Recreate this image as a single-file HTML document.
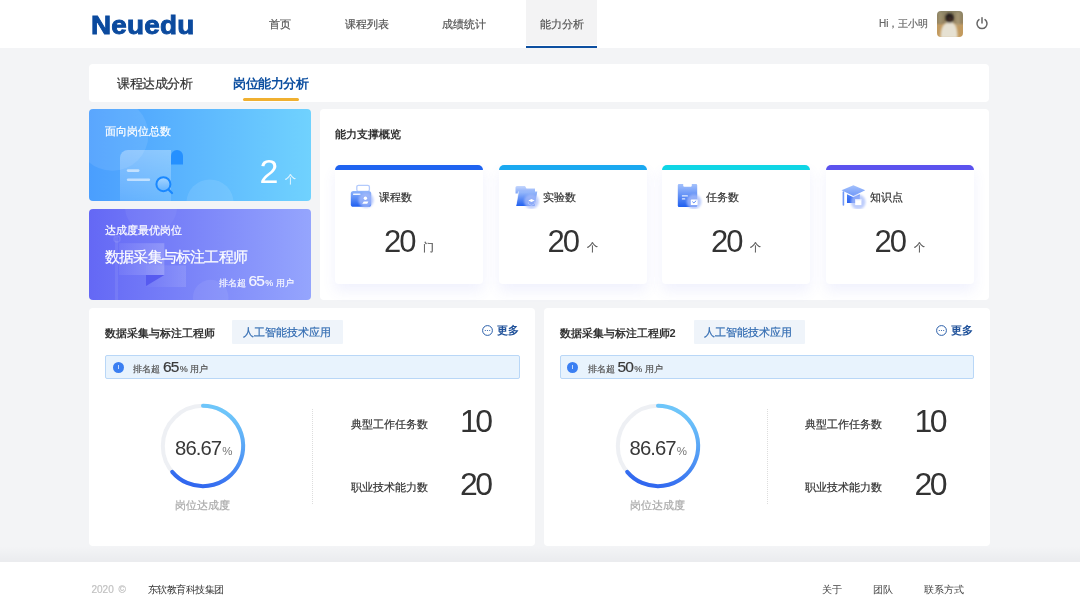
<!DOCTYPE html>
<html><head><meta charset="utf-8">
<style>
*{margin:0;padding:0;box-sizing:border-box}
html{filter:grayscale(0)}
html,body{width:1080px;height:610px;overflow:hidden;background:#f3f4f6;font-family:"Liberation Sans",sans-serif;color:#333}
.a{position:absolute;white-space:nowrap}
#hdr{position:absolute;left:0;top:0;width:1080px;height:48px;background:#fff}
.a.logo{left:91.3px;top:10px;font-size:26.3px;line-height:30px;font-weight:bold;color:#0b4a9e;letter-spacing:0.2px;transform:scaleX(1.06);transform-origin:0 0;-webkit-text-stroke:0.9px #0b4a9e}
.nav{top:16px;font-size:11px;color:#555;line-height:16px}
.card{position:absolute;background:#fff;border-radius:4px}
.a,.bc>*,.sc>*{-webkit-text-stroke:0.2px currentColor}.sn,.sc .num,.pct,.big,.bc .ttl,.bc .more,.bld{-webkit-text-stroke:0!important}
</style></head><body>
<div id="hdr">
  <div class="a logo">Neuedu</div>
  <div class="a nav" style="left:269px">首页</div>
  <div class="a nav" style="left:345px">课程列表</div>
  <div class="a nav" style="left:442px">成绩统计</div>
  <div class="a" style="left:526px;top:0;width:71px;height:45px;background:#f3f3f4"></div>
  <div class="a" style="left:526px;top:46px;width:71px;height:2px;background:#0d4fa0"></div>
  <div class="a nav" style="left:540px">能力分析</div>
  <div class="a" style="left:879px;top:17px;font-size:10px;color:#666;line-height:14px">Hi，王小明</div>
  <svg class="a" style="left:937px;top:11px" width="26" height="26" viewBox="0 0 26 26"><defs><clipPath id="avc"><rect width="26" height="26" rx="4"/></clipPath>
<linearGradient id="avbg" x1="0" y1="0" x2="0" y2="1"><stop offset="0" stop-color="#8c8466"/><stop offset="0.45" stop-color="#978460"/><stop offset="0.55" stop-color="#c09a62"/><stop offset="1" stop-color="#c49a5c"/></linearGradient>
<filter id="avb"><feGaussianBlur stdDeviation="0.8"/></filter></defs>
<g clip-path="url(#avc)"><rect width="26" height="26" fill="url(#avbg)"/>
<g filter="url(#avb)"><rect x="2" y="1" width="3" height="12" fill="#a89c78" opacity="0.6"/><rect x="19" y="1" width="4" height="14" fill="#b0a27e" opacity="0.6"/>
<path d="M3.5 27C3.5 16 6.5 11.5 12.5 11c6 .5 8 4.5 8 16z" fill="#e6e1d2"/>
<ellipse cx="12.6" cy="7" rx="4.3" ry="4.8" fill="#221c1a"/>
<ellipse cx="12.9" cy="8.5" rx="2.4" ry="3" fill="#3e2c24"/></g></g></svg>
  <svg class="a" style="left:975px;top:17px" width="14" height="13" viewBox="0 0 14 13"><path d="M4 2.6A5 5 0 1 0 10 2.6" fill="none" stroke="#666" stroke-width="1.5" stroke-linecap="round"/><path d="M7 0.8V6" stroke="#666" stroke-width="1.5" stroke-linecap="round"/></svg>
</div>

<!-- tab card -->
<div class="card" style="left:89px;top:64px;width:900px;height:38px"></div>
<div class="a" style="left:117px;top:75px;letter-spacing:-0.4px;font-size:13px;color:#333;line-height:17px">课程达成分析</div>
<div class="a bld" style="left:233px;top:75px;letter-spacing:-0.4px;font-size:13px;color:#0d4fa0;font-weight:bold;line-height:17px">岗位能力分析</div>
<div class="a" style="left:243px;top:98px;width:56px;height:3px;background:#f0b030;border-radius:2px"></div>

<!-- blue card -->
<div class="card" style="left:89px;top:109px;width:222px;height:92px;background:linear-gradient(90deg,#4a9efe,#70d2fe);overflow:hidden">
<svg width="222" height="92" viewBox="0 0 222 92" style="position:absolute;left:0;top:0">
<defs><linearGradient id="scg" x1="0" y1="0" x2="0" y2="1"><stop offset="0" stop-color="#fff" stop-opacity="0.32"/><stop offset="1" stop-color="#fff" stop-opacity="0.12"/></linearGradient>
<linearGradient id="mgg" x1="0" y1="0" x2="0" y2="1"><stop offset="0" stop-color="#a8d6ff"/><stop offset="1" stop-color="#62b2ff"/></linearGradient></defs>
<circle cx="23.4" cy="25.8" r="36" fill="#fff" fill-opacity="0.09"/>
<circle cx="121" cy="94" r="23.6" fill="#fff" fill-opacity="0.1"/>
<path d="M31 92V49a8 8 0 0 1 8-8H82V92z" fill="url(#scg)"/>
<path d="M82 55.4V47a6 6 0 0 1 12 0v8.4z" fill="#2590ff"/>
<rect x="37.8" y="60.3" width="12.7" height="2.6" rx="1.3" fill="#fff" fill-opacity="0.55"/>
<rect x="37.8" y="69.5" width="23.4" height="2.6" rx="1.3" fill="#fff" fill-opacity="0.55"/>
<circle cx="74.4" cy="75.2" r="7" fill="url(#mgg)" stroke="#1a88ff" stroke-width="2"/>
<path d="M80 81l3 3" stroke="#1a88ff" stroke-width="2.2" stroke-linecap="round"/>
</svg></div>
<div class="a" style="left:105px;top:124px;font-size:11px;color:#fff;line-height:14px">面向岗位总数</div>
<div class="a big" style="left:259.5px;top:151px;font-size:34px;color:#fff;line-height:40px">2</div>
<div class="a" style="left:285px;top:172px;font-size:11px;color:rgba(255,255,255,0.72);line-height:14px">个</div>

<!-- purple card -->
<div class="card" style="left:89px;top:209px;width:222px;height:91px;background:linear-gradient(90deg,#6468f5,#95a5fd);overflow:hidden">
<svg width="222" height="91" viewBox="0 0 222 91" style="position:absolute;left:0;top:0">
<defs><linearGradient id="flg" x1="0" y1="0" x2="1" y2="0"><stop offset="0" stop-color="#fff" stop-opacity="0.06"/><stop offset="1" stop-color="#fff" stop-opacity="0.2"/></linearGradient>
<linearGradient id="flg2" x1="0" y1="0" x2="1" y2="0"><stop offset="0" stop-color="#fff" stop-opacity="0.02"/><stop offset="1" stop-color="#fff" stop-opacity="0.12"/></linearGradient></defs>
<circle cx="62" cy="-2" r="26" fill="#fff" fill-opacity="0.05"/>
<rect x="26" y="28" width="3" height="63" fill="#fff" fill-opacity="0.08"/>
<circle cx="28" cy="30" r="3" fill="none" stroke="#fff" stroke-opacity="0.1" stroke-width="1.5"/>
<rect x="57" y="56.4" width="40" height="21.6" fill="url(#flg2)"/>
<rect x="30" y="34.2" width="45.3" height="31.8" fill="url(#flg)"/>
<path d="M57 66H75.3L57 77z" fill="#5356ee" fill-opacity="0.9"/>
<circle cx="121.7" cy="88.6" r="17.8" fill="#fff" fill-opacity="0.07"/>
</svg></div>
<div class="a" style="left:105px;top:223px;font-size:11px;color:#fff;line-height:14px">达成度最优岗位</div>
<div class="a" style="left:105px;top:248px;font-size:15px;letter-spacing:-0.8px;color:#fff;line-height:18px">数据采集与标注工程师</div>
<div class="a" style="left:218.5px;top:273px;font-size:9.4px;color:rgba(255,255,255,0.9);line-height:16px">排名超<span style="font-size:15.5px;letter-spacing:-0.8px;margin-left:3px">65</span><span style="font-size:9px;margin-left:1px">%</span> 用户</div>

<!-- overview card -->
<div class="card" style="left:320px;top:109px;width:669px;height:191px"></div>
<div class="a bld" style="left:335px;top:127px;font-size:11px;font-weight:bold;color:#333;line-height:14px">能力支撑概览</div>


<!-- sub cards -->
<style>
.sc{position:absolute;top:165px;width:148px;height:119px;background:#fff;border-radius:5px 5px 4px 4px;box-shadow:0 7px 14px rgba(90,100,230,0.09);overflow:hidden}
.sc .bar{position:absolute;left:0;top:0;width:100%;height:5px}
.sc .lbl{position:absolute;left:44px;top:25px;font-size:11px;color:#333;line-height:14px}
.sc .num{position:absolute;left:49px;top:59px;font-size:31px;color:#333;line-height:36px;letter-spacing:-2px}
.sc .unit{position:absolute;top:75px;font-size:11px;color:#555;line-height:14px}
.sc svg{position:absolute;left:15px;top:18px}
</style>
<div class="sc" style="left:335px"><div class="bar" style="background:#1f63f0"></div>
<svg width="26" height="26" viewBox="0 0 26 26"><defs><linearGradient id="g1" x1="0" y1="0" x2="0" y2="1"><stop offset="0" stop-color="#8fb4fb"/><stop offset="1" stop-color="#1f5ff0"/></linearGradient><filter id="bl1" x="-50%" y="-50%" width="200%" height="200%"><feGaussianBlur stdDeviation="1.1"/></filter></defs>
<rect x="6.8" y="2.3" width="12.6" height="6" rx="1.6" fill="#fff" stroke="#b3cafc" stroke-width="1.3"/>
<rect x="0.8" y="8" width="20.4" height="15.8" rx="2.6" fill="url(#g1)"/>
<rect x="2.9" y="10.4" width="7.8" height="1.7" rx="0.8" fill="#fff" opacity="0.9"/>
<circle cx="16" cy="17.2" r="7.6" fill="#a9bdfa" opacity="0.75" filter="url(#bl1)"/>
<circle cx="15.4" cy="15.3" r="1.7" fill="#fff"/><path d="M12.2 20.8l1.6-2.4h4.6l-1.2 2.4z" fill="#fff"/></svg>
<div class="lbl">课程数</div><div class="num">20</div><div class="unit" style="left:88px">门</div></div>

<div class="sc" style="left:498.5px"><div class="bar" style="background:#1aa8f0"></div>
<svg width="26" height="26" viewBox="0 0 26 26"><defs><linearGradient id="g2" x1="0" y1="0" x2="0" y2="1"><stop offset="0" stop-color="#9cbcfb"/><stop offset="1" stop-color="#1f5ff0"/></linearGradient><linearGradient id="g2b" x1="0" y1="0" x2="0" y2="1"><stop offset="0" stop-color="#c6d7fd"/><stop offset="1" stop-color="#7fa5f8"/></linearGradient><filter id="bl2" x="-50%" y="-50%" width="200%" height="200%"><feGaussianBlur stdDeviation="1.1"/></filter></defs>
<path d="M1.5 4.5a1.5 1.5 0 0 1 1.5-1.5h8l1.5 2.5h8.5v5h-19.5z" fill="url(#g2b)"/>
<path d="M4.5 8.5h18.8l-2.6 14.5h-18.5z" fill="url(#g2)"/>
<path d="M4.5 8.5l-2.3 13" stroke="#fff" stroke-width="0.8" opacity="0.8"/>
<circle cx="17.5" cy="18.6" r="7.4" fill="#a9bdfa" opacity="0.75" filter="url(#bl2)"/>
<path d="M14.3 17.4l3.2-1.5 3.2 1.5-3.2 1.6z" fill="#fff"/><path d="M14.3 18.6v2.2l3.2 1.5 3.2-1.5v-2.2" fill="none" stroke="#fff" stroke-width="0.5" opacity="0.6"/></svg>
<div class="lbl">实验数</div><div class="num">20</div><div class="unit" style="left:88px">个</div></div>

<div class="sc" style="left:662px"><div class="bar" style="background:#0fd5e5"></div>
<svg width="26" height="26" viewBox="0 0 26 26"><defs><linearGradient id="g3" x1="0" y1="0" x2="0" y2="1"><stop offset="0" stop-color="#a5c2fc"/><stop offset="1" stop-color="#1f5ff0"/></linearGradient><filter id="bl3" x="-50%" y="-50%" width="200%" height="200%"><feGaussianBlur stdDeviation="1.1"/></filter></defs>
<path d="M0.8 2.2a1.2 1.2 0 0 1 1.2-1.2h4.2v1.5a1.2 1.2 0 0 0 1.2 1.2h6.2a1.2 1.2 0 0 0 1.2-1.2V1h4.2a1.2 1.2 0 0 1 1.2 1.2v20.5a1.2 1.2 0 0 1-1.2 1.2H2a1.2 1.2 0 0 1-1.2-1.2z" fill="url(#g3)"/>
<rect x="4.8" y="12.3" width="6.2" height="1.2" rx="0.6" fill="#fff" opacity="0.85"/><rect x="4.8" y="15.3" width="3.6" height="1.2" rx="0.6" fill="#fff" opacity="0.85"/>
<circle cx="17" cy="18.8" r="7.4" fill="#a9bdfa" opacity="0.75" filter="url(#bl3)"/>
<rect x="13.8" y="16.4" width="6.8" height="5.6" rx="0.5" fill="#fff"/><path d="M15.3 18.6l1.6 1.3 2.3-2.2" fill="none" stroke="#4a7cf3" stroke-width="0.9"/></svg>
<div class="lbl">任务数</div><div class="num">20</div><div class="unit" style="left:88px">个</div></div>

<div class="sc" style="left:825.5px"><div class="bar" style="background:#5b52ee"></div>
<svg width="26" height="26" viewBox="0 0 26 26"><defs><linearGradient id="g4" x1="0" y1="0" x2="0" y2="1"><stop offset="0" stop-color="#a5c2fc"/><stop offset="1" stop-color="#6f98f8"/></linearGradient><linearGradient id="g4b" x1="0" y1="0" x2="0" y2="1"><stop offset="0" stop-color="#4f82f5"/><stop offset="1" stop-color="#2a62f0"/></linearGradient><filter id="bl4" x="-50%" y="-50%" width="200%" height="200%"><feGaussianBlur stdDeviation="1.1"/></filter></defs>
<path d="M0.5 7.3L12.4 2.2l11.8 5.1-11.8 5.6z" fill="url(#g4)"/>
<rect x="1.6" y="8.2" width="1.6" height="14.5" rx="0.8" fill="#6f98f8"/>
<path d="M6 11.3l6.4 3 6.4-3v8.6H6z" fill="url(#g4b)"/>
<circle cx="17.2" cy="19" r="7.4" fill="#a9bdfa" opacity="0.75" filter="url(#bl4)"/>
<rect x="14.2" y="16.3" width="6.2" height="5.8" fill="#fff"/><rect x="14.2" y="16.3" width="6.2" height="1" fill="#dfe7fd"/></svg>
<div class="lbl">知识点</div><div class="num">20</div><div class="unit" style="left:88px">个</div></div>

<!-- bottom cards -->

<style>
.bc{position:absolute;top:308px;width:446px;height:238px;background:#fff;border-radius:4px}
.bc>*{position:absolute;white-space:nowrap}
.bc .ttl{left:16px;top:18px;font-size:11px;font-weight:bold;color:#333;line-height:14px}
.bc .tag{top:12px;width:111px;height:23.5px;background:#eff4fa;color:#336cb2;font-size:11px;line-height:25px;text-align:center;border-radius:1px;padding-right:2px}
.bc .more-ic{left:392.5px;top:16.5px}
.bc .more{left:407.5px;top:15px;font-size:11px;font-weight:bold;color:#1e5099;line-height:14px}
.bc .alert{left:16px;top:47px;width:414.5px;height:24px;background:#e8f3fd;border:1px solid #b9d7f7;border-radius:2px}
.bc .alert .ic{position:absolute;left:6.8px;top:5.7px;width:11px;height:11px;border-radius:50%;background:#3b7ff2}.bc .alert .ic i{position:absolute;left:5px;top:3.5px;width:1px;height:4px;background:rgba(255,255,255,0.7)}
.bc .alert .at{position:absolute;left:27px;top:2px;font-size:9.4px;color:#555;line-height:18px}
.bc .alert .at b{font-size:15.5px;font-weight:normal;color:#3a3a3a;letter-spacing:-0.8px;margin-left:3px}.bc .alert .at s{text-decoration:none;font-size:9px;margin-left:1px}
.bc .ring{left:69.3px;top:93.1px}
.bc .pct{left:86px;top:127.5px;font-size:20.3px;color:#383838;line-height:24px;letter-spacing:-0.9px}
.bc .pct span{font-size:11.5px;color:#777;letter-spacing:0;margin-left:1px}
.bc .rl{left:86px;top:190px;font-size:11px;color:#aaa;line-height:14px}
.bc .div{left:223px;top:101px;width:0;height:95px;border-left:1px dotted #ddd}
.bc .sl{left:261.5px;font-size:11px;color:#333;line-height:14px}
.bc .sn{left:371px;font-size:32px;color:#333;line-height:36px;letter-spacing:-2.5px}
</style>
<div class="bc" style="left:89px">
  <div class="ttl">数据采集与标注工程师</div>
  <div class="tag" style="left:143px">人工智能技术应用</div>
  <svg class="more-ic" width="11" height="11" viewBox="0 0 11 11"><circle cx="5.5" cy="5.5" r="4.9" fill="none" stroke="#2a5ea8" stroke-width="1"/><circle cx="3.3" cy="5.5" r="0.6" fill="#2a5ea8"/><circle cx="5.5" cy="5.5" r="0.6" fill="#2a5ea8"/><circle cx="7.7" cy="5.5" r="0.6" fill="#2a5ea8"/></svg>
  <div class="more">更多</div>
  <div class="alert"><span class="ic"><i></i></span><span class="at">排名超<b>65</b><s>%</s> 用户</span></div>
  <svg class="ring" width="90" height="90" viewBox="0 0 90 90"><defs><linearGradient id="rg1" x1="0.5" y1="0" x2="0.2" y2="1"><stop offset="0" stop-color="#6ec6fa"/><stop offset="1" stop-color="#2e63ef"/></linearGradient></defs>
  <circle cx="45" cy="45" r="40.2" fill="none" stroke="#eef0f4" stroke-width="4"/>
  <path d="M45 4.8A40.2 40.2 0 1 1 14.2 70.84" fill="none" stroke="url(#rg1)" stroke-width="4" stroke-linecap="round"/></svg>
  <div class="pct">86.67<span>%</span></div>
  <div class="rl">岗位达成度</div>
  <div class="div"></div>
  <div class="sl" style="top:109px">典型工作任务数</div>
  <div class="sn" style="top:95px">10</div>
  <div class="sl" style="top:172px">职业技术能力数</div>
  <div class="sn" style="top:158px">20</div>
</div>
<div class="bc" style="left:543.5px">
  <div class="ttl">数据采集与标注工程师2</div>
  <div class="tag" style="left:150px">人工智能技术应用</div>
  <svg class="more-ic" width="11" height="11" viewBox="0 0 11 11"><circle cx="5.5" cy="5.5" r="4.9" fill="none" stroke="#2a5ea8" stroke-width="1"/><circle cx="3.3" cy="5.5" r="0.6" fill="#2a5ea8"/><circle cx="5.5" cy="5.5" r="0.6" fill="#2a5ea8"/><circle cx="7.7" cy="5.5" r="0.6" fill="#2a5ea8"/></svg>
  <div class="more">更多</div>
  <div class="alert"><span class="ic"><i></i></span><span class="at">排名超<b>50</b><s>%</s> 用户</span></div>
  <svg class="ring" width="90" height="90" viewBox="0 0 90 90"><defs><linearGradient id="rg2" x1="0.5" y1="0" x2="0.2" y2="1"><stop offset="0" stop-color="#6ec6fa"/><stop offset="1" stop-color="#2e63ef"/></linearGradient></defs>
  <circle cx="45" cy="45" r="40.2" fill="none" stroke="#eef0f4" stroke-width="4"/>
  <path d="M45 4.8A40.2 40.2 0 1 1 14.2 70.84" fill="none" stroke="url(#rg2)" stroke-width="4" stroke-linecap="round"/></svg>
  <div class="pct">86.67<span>%</span></div>
  <div class="rl">岗位达成度</div>
  <div class="div"></div>
  <div class="sl" style="top:109px">典型工作任务数</div>
  <div class="sn" style="top:95px">10</div>
  <div class="sl" style="top:172px">职业技术能力数</div>
  <div class="sn" style="top:158px">20</div>
</div>

<!-- footer -->
<div class="a" style="left:0;top:546px;width:1080px;height:16px;background:linear-gradient(180deg,rgba(0,0,20,0) 0%,rgba(0,0,20,0.035) 100%)"></div>
<div class="a" style="left:0;top:562px;width:1080px;height:48px;background:#fff"></div>
<div class="a" style="left:91.5px;top:583px;font-size:10px;color:#c2c2c2;line-height:14px;word-spacing:2px">2020 ©</div>
<div class="a bld" style="left:147.5px;top:583px;font-size:10px;letter-spacing:-0.5px;color:#333;line-height:14px">东软教育科技集团</div>
<div class="a bld" style="left:822px;top:583px;font-size:10px;color:#444;line-height:14px">关于</div>
<div class="a bld" style="left:873px;top:583px;font-size:10px;color:#444;line-height:14px">团队</div>
<div class="a bld" style="left:924px;top:583px;font-size:10px;color:#444;line-height:14px">联系方式</div>
</body></html>
